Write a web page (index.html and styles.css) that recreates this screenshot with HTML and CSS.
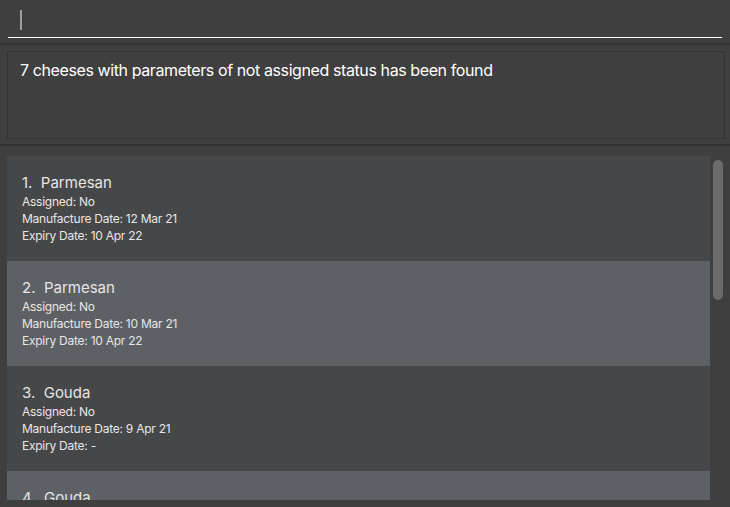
FILE: index.html
```html
<!DOCTYPE html>
<html>
<head>
<meta charset="utf-8">
<link rel="stylesheet" href="styles.css">
</head>
<body>
<div class="app">
  <div class="command">
    <div class="command-field"><span class="caret"></span></div>
  </div>
  <div class="sep"></div>
  <div class="result">
    <div class="result-box">7 cheeses with parameters of not assigned status has been found</div>
  </div>
  <div class="sep"></div>
  <div class="list-wrap">
    <div class="list">
      <div class="cell odd">
        <div class="name">1.&nbsp; Parmesan</div>
        <div class="field">Assigned: No</div>
        <div class="field">Manufacture Date: 12 Mar 21</div>
        <div class="field">Expiry Date: 10 Apr 22</div>
      </div>
      <div class="cell even">
        <div class="name">2.&nbsp; Parmesan</div>
        <div class="field">Assigned: No</div>
        <div class="field">Manufacture Date: 10 Mar 21</div>
        <div class="field">Expiry Date: 10 Apr 22</div>
      </div>
      <div class="cell odd">
        <div class="name">3.&nbsp; Gouda</div>
        <div class="field">Assigned: No</div>
        <div class="field">Manufacture Date: 9 Apr 21</div>
        <div class="field">Expiry Date: -</div>
      </div>
      <div class="cell even">
        <div class="name">4.&nbsp; Gouda</div>
        <div class="field">Assigned: No</div>
        <div class="field">Manufacture Date: 9 Apr 21</div>
        <div class="field">Expiry Date: -</div>
      </div>
    </div>
    <div class="scrollbar"><div class="thumb"></div></div>
  </div>
</div>
</body>
</html>
```
FILE: styles.css
```css
html, body {
  margin: 0;
  padding: 0;
  background: #3f3f3f;
  height: 100%;
  overflow: hidden;
}
.app {
  font-family: "Inter", "Open Sans", sans-serif;
  color: #ffffff;
  display: flex;
  flex-direction: column;
}
.command {
  padding: 0 8px 0 8px;
  height: 43px;
}
.command-field {
  height: 37px;
  border-bottom: 1px solid #ffffff;
  box-sizing: content-box;
  display: flex;
  align-items: flex-start;
  padding-left: 12px;
}
.caret {
  margin-top: 10px;
  width: 2px;
  height: 20px;
  background: #9e9e9e;
}
.sep {
  height: 2px;
  background: #353535;
}
.result {
  padding: 6px 5px 5px 7px;
}
.result-box {
  height: 88px;
  border: 1px solid #333333;
  padding: 8px 12px;
  box-sizing: border-box;
  font-size: 16px;
  letter-spacing: -0.4px;
}
.list-wrap {
  margin-top: 10px;
  padding-left: 7px;
  display: flex;
  height: 344px;
  overflow: hidden;
}
.list {
  width: 703px;
  display: flex;
  flex-direction: column;
}
.cell {
  flex: 0 0 105px;
  box-sizing: border-box;
  padding: 18px 15px 0 15px;
  color: #e6e6e6;
}
.odd { background: #464749; }
.even { background: #5d6165; }
.name {
  font-size: 15px;
  line-height: 18px;
  margin-bottom: 1px;
}
.field {
  font-size: 12px;
  line-height: 17px;
  letter-spacing: -0.25px;
}
.scrollbar {
  width: 13px;
  padding: 4px 0 0 3px;
  box-sizing: border-box;
}
.thumb {
  width: 10px;
  height: 140px;
  border-radius: 5px;
  background: #6b6b6b;
}
```
